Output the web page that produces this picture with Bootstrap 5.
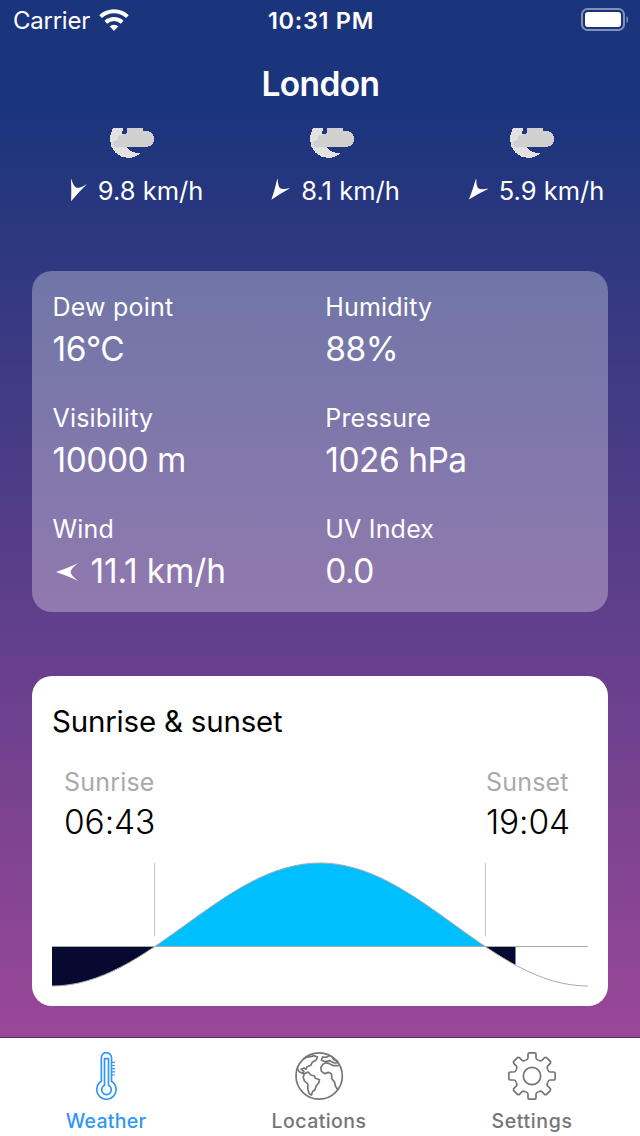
<!DOCTYPE html>
<html lang="en">
<head>
<meta charset="utf-8">
<meta name="viewport" content="width=device-width, initial-scale=1">
<title>London weather</title>
<link href="https://cdn.jsdelivr.net/npm/bootstrap@5.3.0/dist/css/bootstrap.min.css" rel="stylesheet">
<style>
body{font-family:Inter,"Liberation Sans",sans-serif;height:1136px;overflow:hidden;line-height:1;color:#fff;background:linear-gradient(#1b357c 115px,#9a4798 1037px)}
svg{display:block;flex:none}
.statusbar{height:40px;padding:0 12px 0 13px;font-size:24px}
.statusbar>*{flex:1}
.statusbar span{padding-top:2px;letter-spacing:-.25px}
.statusbar .clock{font-weight:600;font-size:23.5px;letter-spacing:.7px;padding-left:1px}
.wifi{margin-left:9px}
.titlebar{height:88px;font-size:33.5px;font-weight:600;letter-spacing:-.6px;padding:2px 0 0 1px}
.hours{height:143px;padding:0 8px 0 32px}
.hour{width:200px}
.speed{font-size:25.5px;margin-top:17px;height:32px;gap:11px;padding-left:2px}
.panel{margin:0 32px;border-radius:20px}
.metrics{height:341px;background:rgba(255,255,255,.31);padding:20px 10px 0 20.5px}
.metric{height:111px}
.metric dt,.sun dt{font-weight:400;font-size:25px;line-height:32px;letter-spacing:.2px}
.metric dd,.sun dd{font-size:33.5px;line-height:42px;margin:5px 0 0;letter-spacing:-.5px}
.metric dd.wind{gap:11.5px;padding-left:2.5px;letter-spacing:-.15px}
.wind svg{margin-top:2px}
.suncard{height:330px;margin-top:64px;background:#fff;color:#000;padding:29px 20px 0}
.suncard h2{font-size:29.5px;line-height:32px;font-weight:400;margin:0;letter-spacing:-.2px}
.sun{padding:29px 18px 0 12px}
.sun dt{color:#aaa}
.sun dd{font-weight:300;margin-top:3px;letter-spacing:-.1px}
.tabs{height:99px;background:#fff;border-top:1px solid #5c2b5b;font-size:19.5px;font-weight:500;color:#757575;padding-top:14px}
.tab{width:213px;color:inherit;text-decoration:none;letter-spacing:.45px}
.tab.active{color:#2f96fb;letter-spacing:.25px}
.tab:last-child{letter-spacing:.65px}
.tab span{margin:12px 1px 0 0}
.tab svg{width:48px;height:48px;fill:none;stroke:currentColor;stroke-linejoin:round}
</style>
</head>
<body class="d-flex flex-column">
<svg width="0" height="0" class="position-absolute">
<defs>
<symbol id="night-cloud" viewBox="0 0 44 30"><g shape-rendering="crispEdges"><path fill="#e2e2e2" d="M3.300 0H13L12 6L16.500 19Q21 25 30 25.500Q25 30 18.500 30C8 30 0 22 0 11.500Q0 5 3.300 0Z"/><path fill="#d0d0d0" d="M17 0H32.300L33.500 2.700H36.500Q44 4 44 11Q44 18 36.500 19H5L2.500 17Q2 14 5 13L7.700 11.500V8.500L10 7L13 6H16L17 4Z"/></g></symbol>
<symbol id="arrow" viewBox="-12 -12 24 24"><path fill="currentColor" d="M-11 0Q1-4 11-8.700Q4-3.500 3.500 0Q4 3.500 11 8.700Q1 4-11 0Z"/></symbol>
<path id="tooth" d="M-6.500-15.700Q-4-16.500-4-18V-21.500Q-4-23.200-2.300-23.200H2.300Q4-23.200 4-21.500V-18Q4-16.500 6.500-15.700"/>
<clipPath id="daylight"><rect x="102" y="0" width="332" height="103.500"/></clipPath>
<clipPath id="dark"><path d="M0 103.500H102.500V144H0ZM433 103.500H463.500V144H433Z"/></clipPath>
</defs>
</svg>

<header class="statusbar d-flex align-items-center">
  <div class="d-flex align-items-center"><span>Carrier</span>
    <svg class="wifi" width="30" height="22" viewBox="-45 -66 90 66" fill="#fff"><path d="M-44.300-47.500A65 65 0 0 1 44.300-47.500L36.100-38.700A53 53 0 0 0-36.100-38.700ZM-28.500-30.500A42 42 0 0 1 28.500-30.500L20.500-21.900A30 30 0 0 0-20.500-21.900ZM-13-13.900A19 19 0 0 1 13-13.900L0 0Z"/></svg></div>
  <span class="clock text-center">10:31 PM</span>
  <div class="d-flex justify-content-end"><svg width="48" height="24" viewBox="0 0 48 24"><rect x="2" y="1" width="42" height="21" rx="5.500" fill="none" stroke="#fff" stroke-opacity=".45" stroke-width="2"/><rect x="5" y="4" width="36" height="15" rx="3" fill="#fff"/><path d="M46.500 8Q48 8.500 48 11.500T46.500 15Z" fill="#fff" fill-opacity=".5"/></svg></div>
</header>
<div class="titlebar d-flex justify-content-center align-items-center">London</div>

<section class="hours d-flex">
  <div class="hour d-flex flex-column align-items-center"><svg width="44" height="30"><use href="#night-cloud"/></svg><div class="speed d-flex align-items-center"><svg width="24" height="24"><use href="#arrow" transform="rotate(-69 12 12)"/></svg><span>9.8 km/h</span></div></div>
  <div class="hour d-flex flex-column align-items-center"><svg width="44" height="30"><use href="#night-cloud"/></svg><div class="speed d-flex align-items-center"><svg width="24" height="24"><use href="#arrow" transform="rotate(-53 12 12)"/></svg><span>8.1 km/h</span></div></div>
  <div class="hour d-flex flex-column align-items-center"><svg width="44" height="30"><use href="#night-cloud"/></svg><div class="speed d-flex align-items-center ps-1"><svg width="24" height="24"><use href="#arrow" transform="rotate(-50 12 12)"/></svg><span>5.9 km/h</span></div></div>
</section>

<dl class="panel metrics row g-0 mb-0 align-content-start">
  <div class="col-6 metric"><dt>Dew point</dt><dd>16°C</dd></div>
  <div class="col-6 metric"><dt>Humidity</dt><dd>88%</dd></div>
  <div class="col-6 metric"><dt>Visibility</dt><dd>10000 m</dd></div>
  <div class="col-6 metric"><dt>Pressure</dt><dd>1026 hPa</dd></div>
  <div class="col-6 metric"><dt>Wind</dt><dd class="wind d-flex align-items-center"><svg width="24" height="24"><use href="#arrow"/></svg><span>11.1 km/h</span></dd></div>
  <div class="col-6 metric"><dt>UV Index</dt><dd>0.0</dd></div>
</dl>

<section class="panel suncard">
  <h2>Sunrise &amp; sunset</h2>
  <dl class="sun d-flex justify-content-between mb-0">
    <div><dt>Sunrise</dt><dd>06:43</dd></div>
    <div><dt>Sunset</dt><dd>19:04</dd></div>
  </dl>
  <svg width="536" height="144" viewBox="0 0 536 144">
    <path clip-path="url(#daylight)" fill="#00bfff" d="M0 143C97.600 143 170.400 20 268 20S438.400 143 536 143V144H0Z"/>
    <path clip-path="url(#dark)" fill="#060a30" d="M0 143C97.600 143 170.400 20 268 20S438.400 143 536 143V0H0Z"/>
    <g fill="none" stroke="#aaa"><path d="M0 143C97.600 143 170.400 20 268 20S438.400 143 536 143"/><path d="M0 103.500H536"/><path stroke="#c4c4c4" d="M102.500 20V93.500M433.500 20V93.500"/></g>
  </svg>
</section>

<nav class="tabs d-flex mt-auto">
  <a class="tab active d-flex flex-column align-items-center"><svg viewBox="99 66 144 144" stroke-width="5"><path d="M154 154V83A15.200 15.200 0 0 1 184.500 83V154A29 29 0 1 1 154 154Z"/><path d="M163.500 166V86H175.500V166A14.500 14.500 0 1 1 163.500 166Z"/><path stroke-width="3.500" d="M184 97H195M184 106.500H195M184 116H195M184 125.500H195M184 135H195"/></svg><span>Weather</span></a>
  <a class="tab d-flex flex-column align-items-center"><svg viewBox="107.500 66 144 144" stroke-width="5" overflow="visible"><circle cx="177" cy="138" r="69.500"/><path d="M131 85Q142 79 152 80L162 77L172 81L167 91L156 97L152 106L141 110L137 118L132 114L123 118L131 124L128 130L135 132M110 113L117 125L127 130L133 132"/><path d="M132 131L144 126L152 135L163 138L166 145L178 149L176 158L168 168L164 180L157 185L154 195L147 191L143 178V162L133 153L129 142Z"/><path d="M208 77L198 82L187 81L184 91L196 95L209 92L222 99L236 98M236 107L220 107L208 101L196 98L187 104L182 113L184 124L193 131L206 127L214 132L215 146L223 156L226 169L232 178M216 82L222 90L234 94"/></svg><span>Locations</span></a>
  <a class="tab d-flex flex-column align-items-center"><svg viewBox="-23 -24 48 48" stroke-width="1.700" overflow="visible"><circle r="8.700"/><use href="#tooth"/><use href="#tooth" transform="rotate(45)"/><use href="#tooth" transform="rotate(90)"/><use href="#tooth" transform="rotate(135)"/><use href="#tooth" transform="rotate(180)"/><use href="#tooth" transform="rotate(225)"/><use href="#tooth" transform="rotate(270)"/><use href="#tooth" transform="rotate(315)"/></svg><span>Settings</span></a>
</nav>
<script src="https://cdn.jsdelivr.net/npm/bootstrap@5.3.0/dist/js/bootstrap.bundle.min.js"></script>
</body>
</html>
